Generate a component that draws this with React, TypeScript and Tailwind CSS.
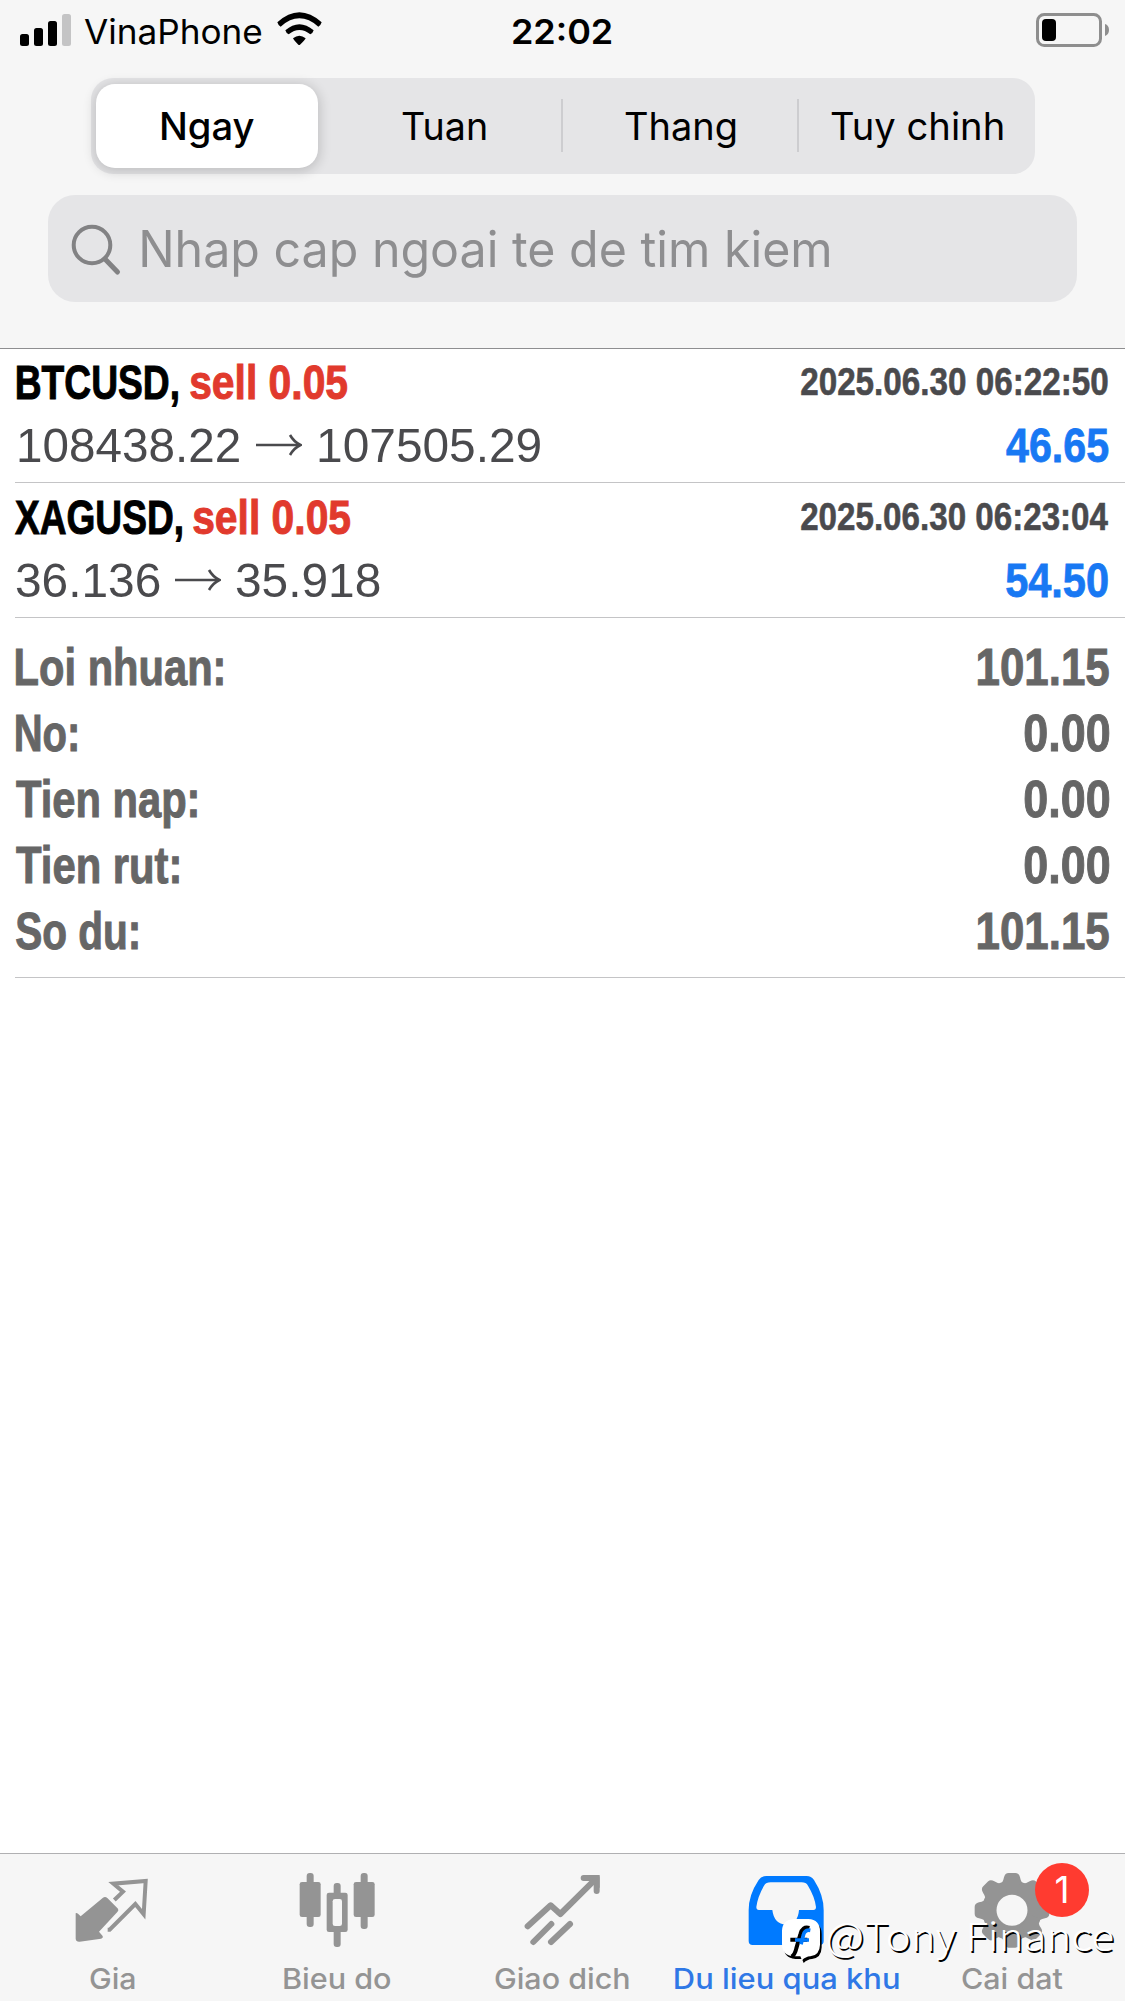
import { useLayoutEffect, useRef, useState } from "react";
import type { ReactNode } from "react";
import clsx from "clsx";

const INTER = "font-['Inter',sans-serif]";
const HELV = "font-['Liberation_Sans',Arial,sans-serif]";

type FitTextProps = {
  children: string;
  width: number;
  className?: string;
};

// Squeezes one line of text so that its ink fills exactly `width` pixels
const FitText = ({ children, width, className }: FitTextProps) => {
  const ref = useRef<HTMLSpanElement>(null);
  const [transform, setTransform] = useState("none");

  useLayoutEffect(() => {
    const ctx = document.createElement("canvas").getContext("2d");
    if (!ref.current || !ctx) return;

    const css = getComputedStyle(ref.current);
    ctx.font = `${css.fontWeight} ${css.fontSize} ${css.fontFamily}`;
    const m = ctx.measureText(children);
    const scale = width / (m.actualBoundingBoxLeft + m.actualBoundingBoxRight);
    setTransform(`translateX(${m.actualBoundingBoxLeft * scale}px) scaleX(${scale})`);
  }, [children, width]);

  return (
    <span className={clsx("block shrink-0 whitespace-nowrap", className)} style={{ width }}>
      <span ref={ref} className="inline-block origin-left" style={{ transform }}>
        {children}
      </span>
    </span>
  );
};

const SignalIcon = () => (
  <svg className="h-[34px] w-[52px]" viewBox="0 0 52 34">
    <rect x="0" y="20" width="9" height="12" rx="2.5" />
    <rect x="14" y="14" width="9" height="18" rx="2.5" />
    <rect x="28" y="7" width="9" height="25" rx="2.5" />
    <rect x="42" y="0" width="9" height="32" rx="2.5" fill="#c4c4c5" />
  </svg>
);

const WifiIcon = () => (
  <svg className="h-[33px] w-[45px]" viewBox="830 38 135 99">
    <path d="M831 69 Q897 9 964 69 Q962 77 954 82 Q897 32 841 82 Q833 77 831 69Z" />
    <path d="M855 93 Q897 57 940 93 Q938 101 930 105 Q897 79 865 105 Q857 101 855 93Z" />
    <path d="M878 117 Q897 101 916 117 Q914 122 899 136 Q897 138 894 136 Q880 122 878 117Z" />
  </svg>
);

const BatteryIcon = () => (
  <svg className="h-[34px] w-[75px]" viewBox="858 39 225 102">
    <rect x="862.5" y="43.5" width="189" height="93" rx="20" fill="none" stroke="#8e8e8e" strokeWidth="9" />
    <rect x="876" y="57" width="42" height="66" rx="12" />
    <path d="M1065 72 Q1077 76 1077 90 Q1077 104 1065 108Z" fill="#8e8e8e" />
  </svg>
);

const StatusBar = () => (
  <div className={clsx("flex h-[62px] items-center pl-5 text-[34px] leading-[62px] text-black", INTER)}>
    <SignalIcon />
    <FitText width={178} className="ml-[12px] mt-[2px]">VinaPhone</FitText>
    <span className="mb-[5px] ml-[15px]">
      <WifiIcon />
    </span>
    <FitText width={99} className="ml-[191px] mt-[2px] font-semibold">22:02</FitText>
    <span className="mb-[2px] ml-auto mr-[14px]">
      <BatteryIcon />
    </span>
  </div>
);

const periods = [
  { label: "Ngay", width: 92 },
  { label: "Tuan", width: 84 },
  { label: "Thang", width: 111 },
  { label: "Tuy chinh", width: 172 },
];

const PeriodTabs = () => (
  <div className={clsx("mx-auto mt-4 grid h-24 w-[944px] grid-cols-4 rounded-[22px] bg-[#e5e5e7] text-[37.5px] leading-[84px]", INTER)}>
    {periods.map((p, i) => (
      <div key={p.label} className="relative flex items-center justify-center">
        {i === 0 ? (
          <div className="mr-[3px] flex h-[84px] w-[222px] items-center justify-center rounded-[19px] bg-white pl-[2px] font-medium shadow-[0_2px_12px_2px_rgba(0,0,0,0.16)]">
            <FitText width={p.width} className="mt-[2px]">{p.label}</FitText>
          </div>
        ) : (
          <FitText width={p.width} className={clsx("mt-[2px]", i === 1 && "mr-[2px]")}>{p.label}</FitText>
        )}
        {(i === 1 || i === 2) && <span className="absolute right-0 top-[21px] h-[53px] w-[2px] bg-[#cdcdd0]" />}
      </div>
    ))}
  </div>
);

const SearchField = () => (
  <div className={clsx("ml-12 mt-[21px] flex h-[107px] w-[1029px] items-center rounded-[27px] bg-[#e5e5e7] pl-[23px] text-[50px] leading-[107px] text-[#8e8e90]", INTER)}>
    <svg className="mt-[2px] h-[52px] w-[52px] shrink-0" viewBox="0 0 52 52" fill="none" stroke="#828284" strokeLinecap="round">
      <circle cx="21" cy="21" r="18.3" strokeWidth="4" />
      <path d="M34 35 L46.5 48" strokeWidth="5" />
    </svg>
    <FitText width={687} className="ml-[19px] mt-[2px]">Nhap cap ngoai te de tim kiem</FitText>
  </div>
);

const Arrow = () => (
  <svg className="h-6 w-[46px] shrink-0" viewBox="0 0 46 24" fill="none" stroke="#4a4a4d" strokeWidth="2.6">
    <path d="M0 12 H44" />
    <path d="M34 2 Q38 9 44.5 12 Q38 15 34 22" />
  </svg>
);

type Deal = {
  symbol: string;
  symbolWidth: number;
  gap: string;
  open: string;
  openWidth: number;
  close: string;
  closeWidth: number;
  arrowGap: string;
  time: string;
  profit: string;
};

const deals: Deal[] = [
  {
    symbol: "BTCUSD,",
    symbolWidth: 161,
    gap: "pl-[2px] gap-[12px]",
    open: "108438.22",
    openWidth: 220,
    close: "107505.29",
    closeWidth: 221,
    arrowGap: "pl-[4px] gap-[17px]",
    time: "2025.06.30 06:22:50",
    profit: "46.65",
  },
  {
    symbol: "XAGUSD,",
    symbolWidth: 167,
    gap: "pl-[0px] gap-[11px]",
    open: "36.136",
    openWidth: 144,
    close: "35.918",
    closeWidth: 144,
    arrowGap: "pl-[1px] gap-[15px]",
    time: "2025.06.30 06:23:04",
    profit: "54.50",
  },
];

const DealRow = ({ deal }: { deal: Deal }) => (
  <div className="ml-[15px] h-[135px] border-b border-[#c4c4c6] pr-[17px] pt-1 text-[49px] leading-[60px]">
    <div className="flex justify-between font-bold [-webkit-text-stroke:1px_currentColor]">
      <div className={clsx("flex", deal.gap)}>
        <FitText width={deal.symbolWidth} className="text-black">{deal.symbol}</FitText>
        <FitText width={157} className="text-[#e13a2d]">sell 0.05</FitText>
      </div>
      <FitText width={307} className="-mt-px text-[39.5px] text-[#4a4a4d] [-webkit-text-stroke-width:0.6px]">{deal.time}</FitText>
    </div>
    <div className="mt-[3px] flex justify-between">
      <div className={clsx("flex items-center text-[#4a4a4d]", deal.arrowGap)}>
        <FitText width={deal.openWidth}>{deal.open}</FitText>
        <Arrow />
        <FitText width={deal.closeWidth}>{deal.close}</FitText>
      </div>
      <FitText width={102} className="font-bold text-[#1878f3] [-webkit-text-stroke:0.8px_currentColor]">{deal.profit}</FitText>
    </div>
  </div>
);

const totals = [
  { label: "Loi nhuan:", labelWidth: 207, value: "101.15", valueWidth: 131 },
  { label: "No:", labelWidth: 61, value: "0.00", valueWidth: 84 },
  { label: "Tien nap:", labelWidth: 181, value: "0.00", valueWidth: 84 },
  { label: "Tien rut:", labelWidth: 163, value: "0.00", valueWidth: 84 },
  { label: "So du:", labelWidth: 122, value: "101.15", valueWidth: 131 },
];

const Totals = () => (
  <div className="ml-[15px] border-b border-[#c4c4c6] pb-[13px] pl-px pr-4 pt-4 text-[52px] font-bold leading-[66px] text-[#666] [-webkit-text-stroke:1px_currentColor]">
    {totals.map((row) => (
      <div key={row.label} className="flex justify-between">
        <FitText width={row.labelWidth}>{row.label}</FitText>
        <FitText width={row.valueWidth}>{row.value}</FitText>
      </div>
    ))}
  </div>
);

const TabIcon = ({ viewBox, children }: { viewBox: string; children: ReactNode }) => (
  <svg className="h-20 w-[90px]" viewBox={viewBox} fill="currentColor">
    {children}
  </svg>
);

const QuotesIcon = () => (
  <TabIcon viewBox="202 84 270 240">
    <path d="M228 220 Q230 217 235 221 L243 229 L309 174 Q316 168 323 174 L355 206 Q358 211 353 216 L298 275 L309 288 Q311 295 304 296 L240 305 Q229 306 228 296Z" />
    <path d="M344 180 L370 155 L341 131 L438 123 L432 223 L407 192 L330 269 L324 269" fill="none" stroke="currentColor" strokeWidth="12" />
  </TabIcon>
);

const ChartIcon = () => (
  <TabIcon viewBox="877 84 270 240">
    <rect x="921" y="99" width="21" height="162" rx="9" />
    <rect x="900" y="126" width="63" height="105" rx="7" />
    <rect x="1083" y="99" width="21" height="168" rx="9" />
    <rect x="1062" y="126" width="63" height="105" rx="7" />
    <rect x="1002" y="129" width="21" height="192" rx="9" />
    <rect x="981" y="158" width="63" height="118" rx="7" />
    <rect x="999" y="177" width="28" height="81" rx="7" fill="#f6f6f6" />
  </TabIcon>
);

const TradeIcon = () => (
  <TabIcon viewBox="352 84 270 240">
    <g fill="none" stroke="currentColor" strokeWidth="18" strokeLinecap="round" strokeLinejoin="round">
      <path d="M384 259 L453 196 L482 222 L586 119" />
      <path d="M552 114 H591 V153" />
      <path d="M401 306 L455 252" />
      <path d="M454 306 L511 252" />
    </g>
    <path d="M570 105 H600 V145Z" />
  </TabIcon>
);

const HistoryIcon = () => (
  <TabIcon viewBox="52 84 270 240">
    <path
      fillRule="evenodd"
      d="M125 108 H246 Q260 108 268 120 Q297 165 297 210 V303 Q297 315 285 315 H84 Q72 315 72 303 V210 Q72 165 102 120 Q110 108 125 108Z M138 127 Q124 127 118 137 Q99 170 95 201 Q95 210 103 210 H143 Q148 252 184 254 Q220 252 223 210 H266 Q274 210 274 201 Q270 170 250 137 Q244 127 231 127Z"
    />
  </TabIcon>
);

const SettingsIcon = () => (
  <TabIcon viewBox="727 84 270 240">
    <circle cx="862" cy="211" r="68" fill="none" stroke="currentColor" strokeWidth="43" />
    {[0, 45, 90, 135, 180, 225, 270, 315].map((a) => (
      <path
        key={a}
        d="M822 139 Q835 129 838 112 Q841 99 852 99 H872 Q883 99 886 112 Q889 129 902 139 L892 160 H832Z"
        transform={`rotate(${a} 862 211)`}
      />
    ))}
  </TabIcon>
);

const tabs = [
  { label: "Gia", width: 45, icon: <QuotesIcon /> },
  { label: "Bieu do", width: 107, icon: <ChartIcon /> },
  { label: "Giao dich", width: 134, icon: <TradeIcon /> },
  { label: "Du lieu qua khu", width: 224, icon: <HistoryIcon />, active: true },
  { label: "Cai dat", width: 101, icon: <SettingsIcon />, badge: "1" },
];

const TabBar = () => (
  <nav className={clsx("mt-auto grid h-[148px] grid-cols-5 border-t border-[#b0b0b2] bg-[#f6f6f6] text-[29px] leading-10", INTER)}>
    {tabs.map((tab) => (
      <div
        key={tab.label}
        className={clsx("relative flex flex-col items-center pr-px pt-[14px]", tab.active ? "font-medium text-[#007aff]" : "font-[450] text-[#949494]")}
      >
        {tab.icon}
        <FitText width={tab.width} className={clsx("mt-[11px]", tab.active && "text-[#2f78e6]")}>
          {tab.label}
        </FitText>
        {tab.badge && (
          <span className="absolute left-[135px] top-[9px] flex h-[54px] w-[54px] items-center justify-center rounded-full bg-[#ff3b30] text-[37px] font-normal text-white">
            {tab.badge}
          </span>
        )}
      </div>
    ))}
  </nav>
);

const Watermark = () => (
  <div className="absolute left-[780px] top-[1915px] flex h-[52px] items-start">
    <svg className="h-[52px] w-[44px] shrink-0" viewBox="165 225 132 156">
      <path
        d="M206 237 H250 Q285 239 285 274 V314 Q284 346 256 349 Q242 350 231 361 L226 349 H206 Q171 346 171 311 V272 Q172 240 206 237Z"
        fill="#000"
        transform="translate(5 8)"
      />
      <path d="M206 237 H250 Q285 239 285 274 V314 Q284 346 256 349 Q242 350 231 361 L226 349 H206 Q171 346 171 311 V272 Q172 240 206 237Z" fill="#fff" />
      <g fill="none" strokeWidth="12">
        <path d="M253 264 Q232 258 226 283 L214 325 Q210 343 200 350 M196 299 H247" stroke="#000" />
        <path d="M256 271 Q239 268 235 286 L228 313 M210 300 H252" stroke="#007aff" strokeWidth="11" />
      </g>
    </svg>
    <FitText
      width={285}
      className="-mt-[7px] ml-[4px] font-['Noto_Sans_CJK_SC',sans-serif] text-[39px] font-light leading-[52px] text-white [text-shadow:1.5px_1.5px_0_#000]"
    >
      @Tony Finance
    </FitText>
  </div>
);

export default function App() {
  return (
    <div className={clsx("relative flex h-[2001px] w-[1125px] flex-col overflow-hidden bg-white", HELV)}>
      <header className="h-[349px] border-b border-[#8e8e90] bg-[#f6f6f6]">
        <StatusBar />
        <PeriodTabs />
        <SearchField />
      </header>
      <main className="-mt-px">
        {deals.map((deal) => (
          <DealRow key={deal.symbol} deal={deal} />
        ))}
        <Totals />
      </main>
      <TabBar />
      <Watermark />
    </div>
  );
}
